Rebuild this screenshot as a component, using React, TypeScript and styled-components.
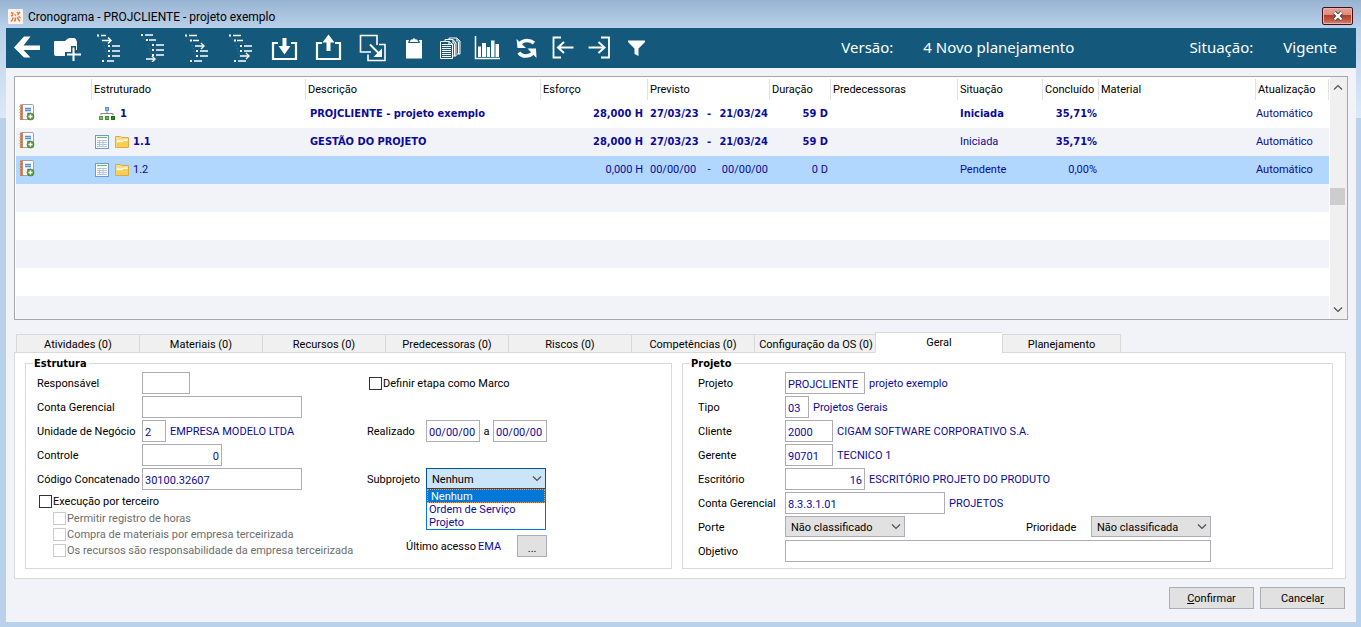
import React from "react";
import styled, { createGlobalStyle, css } from "styled-components";

const UI = `Roboto, Tahoma, "Liberation Sans", sans-serif`;
const UI_BOLD = `"DejaVu Sans Condensed", Tahoma, "DejaVu Sans", sans-serif`;
const navy = "#0a0a9c";
const edge = "#adadb3";
const line = "#d9d9d9";
const pale = "#f2f3f9";

const GlobalStyle = createGlobalStyle`
  *, *::before, *::after { box-sizing: border-box; }
  body { margin: 0; font-family: ${UI}; font-size: 11px; line-height: 14px; color: #000; }
  button, input, select { font: inherit; color: inherit; margin: 0; border-radius: 0; }
`;

/* ---------- window frame ---------- */

const Frame = styled.div`
  display: flex;
  flex-direction: column;
  min-height: 100vh;
  padding: 0 5px 5px 6px;
  background:
    linear-gradient(#98b3d2, #b9d1ea) top / 100% 28px no-repeat,
    linear-gradient(#b9d1ea, #dce9f6) 0 28px / 100% 90px no-repeat,
    #b9d1ea;
`;

const TitleBar = styled.header`
  display: flex;
  align-items: center;
  height: 28px;
  padding: 4px 3px 0 2px;
  gap: 5px;
`;

const Title = styled.h1`
  flex: 1;
  margin: 0;
  padding-top: 2px;
  font: 12px/16px ${UI};
`;

const CloseButton = styled.button`
  display: grid;
  place-items: center;
  width: 31px;
  height: 18px;
  padding: 0;
  border: 1px solid #431016;
  border-radius: 2px;
  box-shadow: inset 0 0 0 1px #e8b3ab;
  background: linear-gradient(#e5a297 0, #d98b7f 44%, #b83a22 46%, #c2604f 80%, #d38c7d);
`;

const ToolBar = styled.div`
  display: flex;
  align-items: center;
  height: 40px;
  padding: 0 19px 0 1px;
  background: #14597c;
  color: #fff;
`;

const ToolButton = styled.button<{ $w: number }>`
  display: flex;
  align-items: center;
  justify-content: center;
  width: ${(p) => p.$w}px;
  height: 40px;
  padding: 0;
  border: 0;
  background: none;
`;

const Status = styled.dl`
  display: flex;
  margin: 0 0 0 auto;
  padding-bottom: 2px;
  font-size: 15px;
  line-height: 20px;
  font-family: "Noto Sans", sans-serif;
`;

const StatusName = styled.dt``;

const StatusValue = styled.dd`
  margin: 0 0 0 30px;
  &:not(:last-child) { margin-right: 115px; }
`;

const Content = styled.main`
  display: flex;
  flex-direction: column;
  flex: 1;
  padding: 8px 8px 13px 8px;
  background: ${pale};
`;

/* ---------- schedule grid ---------- */

const GridBox = styled.section`
  display: flex;
  border: 1px solid #a5a7ac;
  background: #fff;
`;

const Table = styled.table`
  flex: 1;
  width: 0;
  margin: 0 1px;
  table-layout: fixed;
  border-collapse: collapse;
  white-space: nowrap;
`;

const Head = styled.th`
  height: 23px;
  padding: 2px 0 0 2px;
  text-align: left;
  font-weight: 400;
  vertical-align: middle;
  background: linear-gradient(#e2e2e2, #e2e2e2) right 2px / 1px 21px no-repeat;
`;

const Row = styled.tr<{ $tone?: "alt" | "sel"; $bold?: boolean }>`
  height: 28px;
  color: ${navy};
  background: ${(p) => (p.$tone === "sel" ? "#b1d7fe" : p.$tone === "alt" ? pale : "#fff")};
  ${(p) => p.$bold && css`font-family: ${UI_BOLD}; font-weight: 700;`}
`;

const Cell = styled.td<{ $right?: boolean; $plain?: boolean; $pad?: number }>`
  padding: 0 ${(p) => (p.$right ? p.$pad ?? 2 : 0)}px 0 ${(p) => (p.$right ? 0 : p.$pad ?? 2)}px;
  text-align: ${(p) => (p.$right ? "right" : "left")};
  ${(p) => p.$plain && css`font-family: ${UI}; font-weight: 400;`}
`;

const Inline = styled.span`
  display: flex;
  align-items: center;
  gap: 4px;
`;

const Period = styled.span`
  display: flex;
  justify-content: space-between;
  padding-right: 2px;
`;

const ScrollBar = styled.div`
  display: flex;
  flex-direction: column;
  align-items: center;
  justify-content: space-between;
  width: 17px;
  padding: 7px 2px 6px 0;
  background: #f0f0f0;
`;

const Thumb = styled.div`
  width: 15px;
  height: 17px;
  margin-bottom: 5px;
  background: #cdcdcd;
`;

/* ---------- tabs ---------- */

const Tabs = styled.nav`
  display: flex;
  align-items: flex-end;
  height: 21px;
  margin: 12px 0 -1px 2px;
`;

const Tab = styled.button<{ $on?: boolean; $w?: number }>`
  width: ${(p) => p.$w ?? 123}px;
  height: 19px;
  padding: 2px 0 0;
  border: 1px solid ${line};
  border-right-width: 0;
  background: #f0f0f0;
  white-space: nowrap;
  &:last-child { border-right-width: 1px; }
  ${(p) => p.$on && css`
    position: relative;
    height: 21px;
    padding-top: 0;
    margin-left: -2px;
    border-bottom-color: #fff;
    background: #fff;
  `}
`;

const Page = styled.section`
  display: flex;
  gap: 10px;
  margin-right: 2px;
  padding: 3px 12px 9px 10px;
  border: 1px solid ${line};
  background: #fff;
`;

const Group = styled.fieldset<{ $inset: number }>`
  display: flex;
  flex: 1 1 0;
  min-width: 0;
  margin: 0;
  padding: 1px 12px 6px ${(p) => p.$inset}px;
  border: 1px solid ${line};

  legend { margin-left: ${(p) => 7 - p.$inset}px; }
`;

const Legend = styled.legend`
  padding: 1px 2px 0 1px;
  font: 700 11px/14px ${UI_BOLD};
`;

const Column = styled.div<{ $w?: number }>`
  display: flex;
  flex-direction: column;
  gap: 2px;
  min-width: 0;
  flex: ${(p) => (p.$w ? `0 0 ${p.$w}px` : "1 1 0")};
`;

const Line = styled.div<{ $push?: boolean; $indent?: number; $after?: number }>`
  display: flex;
  align-items: center;
  height: 22px;
  padding-left: ${(p) => p.$indent ?? 0}px;
  margin-top: ${(p) => (p.$push ? "auto" : "0")};
  margin-bottom: ${(p) => p.$after ?? 0}px;
`;

const Label = styled.label<{ $w?: number; $center?: boolean }>`
  flex: none;
  width: ${(p) => (p.$w ? `${p.$w}px` : "auto")};
  padding-top: 2px;
  text-align: ${(p) => (p.$center ? "center" : "left")};
  white-space: nowrap;
`;

const Field = styled.input<{ $w: number; $right?: boolean }>`
  flex: none;
  width: ${(p) => p.$w}px;
  height: 22px;
  padding: 2px 2px 0;
  border: 1px solid ${edge};
  background: #fff;
  color: ${navy};
  text-align: ${(p) => (p.$right ? "right" : "left")};
`;

const Value = styled.output`
  margin-left: 4px;
  padding-top: 2px;
  color: ${navy};
  white-space: nowrap;
`;

const CheckLabel = styled.label<{ $sub?: boolean }>`
  display: flex;
  align-items: center;
  height: ${(p) => (p.$sub ? 16 : 18)}px;
  padding-left: ${(p) => (p.$sub ? 16 : 2)}px;
  gap: 1px;
  color: ${(p) => (p.$sub ? "#6d6d6d" : "#000")};
  white-space: nowrap;

  span { padding-top: 1px; }
`;

const Check = styled.input`
  appearance: none;
  width: 13px;
  height: 13px;
  border: 1px solid #333;
  background: #fff;
  &:disabled { border-color: #ccc; }
`;

const SelectBox = styled.div`
  position: relative;
  align-self: flex-start;
  width: 120px;
  height: 21px;
  svg { position: absolute; right: 4px; top: 7px; pointer-events: none; }
`;

const Select = styled.select<{ $open?: boolean }>`
  appearance: none;
  display: block;
  width: 100%;
  height: 21px;
  padding: 2px 18px 0 5px;
  border: 1px solid ${(p) => (p.$open ? "#00549a" : edge)};
  background: ${(p) => (p.$open ? "#cce4f7" : "#e1e1e1")};
`;

const Options = styled.ul`
  position: absolute;
  z-index: 1;
  top: 21px;
  left: 0;
  right: 0;
  margin: 0;
  padding: 0;
  border: 1px solid #0078d7;
  border-top: 0;
  background: #fff;
  color: ${navy};
  list-style: none;
`;

const Option = styled.li<{ $on?: boolean }>`
  height: 13px;
  padding-left: 2px;
  line-height: 14px;
  ${(p) => p.$on && css`
    height: 14px;
    padding-left: 3px;
    background: #0078d7;
    color: #fff;
    border: 1px dotted #ff9a3c;
  `}
`;

const PushButton = styled.button<{ $w: number }>`
  width: ${(p) => p.$w}px;
  height: 22px;
  padding: 1px 0 0;
  border: 1px solid ${edge};
  background: #e1e1e1;
`;

const MoreButton = styled(PushButton)`
  margin-left: 16px;
  padding-top: 6px;
`;

const Footer = styled.footer`
  display: flex;
  justify-content: flex-end;
  gap: 6px;
  margin-top: 8px;
  padding-right: 3px;
`;

/* ---------- toolbar drawings ---------- */

const Glyph = ({ w = 28, children }: { w?: number; children: React.ReactNode }) => (
  <svg width={w} height={28} viewBox={`0 0 ${w} 28`} fill="none" stroke="#fff" aria-hidden>
    {children}
  </svg>
);

const Solid = ({ d }: { d: string }) => <path d={d} fill="#fff" stroke="none" />;

type Branch = { dot?: number; from: number; to: number; y: number; arrow?: boolean };

const BranchGlyph = ({ rows }: { rows: Branch[] }) => (
  <Glyph>
    {rows.map((r) => (
      <g key={r.y} strokeWidth={1.5}>
        {r.dot !== undefined && <path d={`M${r.dot} ${r.y}h2`} strokeWidth={2} />}
        <path d={`M${r.from} ${r.y}H${r.to}`} />
        {r.arrow && <path d={`M${r.to - 3} ${r.y - 3}l3 3-3 3`} strokeWidth={1.4} />}
      </g>
    ))}
    <path d="M3.500 3.500L8 8M9 11L13 23" strokeWidth={1} strokeDasharray="1 2" opacity={0.25} />
  </Glyph>
);

const branches: Branch[][] = [
  [
    { dot: 2, from: 6, to: 11, y: 1.5 },
    { from: 7, to: 16, y: 6.5, arrow: true },
    { dot: 13, from: 17, to: 25, y: 12 },
    { dot: 13, from: 17, to: 25, y: 17 },
    { dot: 13, from: 17, to: 25, y: 22 },
    { dot: 7, from: 12, to: 19, y: 27 },
  ],
  [
    { dot: 2, from: 6, to: 14, y: 1 },
    { dot: 7, from: 10, to: 17, y: 6 },
    { dot: 13, from: 17, to: 25, y: 11 },
    { dot: 13, from: 17, to: 25, y: 16 },
    { dot: 13, from: 17, to: 25, y: 21 },
    { from: 7, to: 16, y: 25, arrow: true },
  ],
  [
    { dot: 2, from: 6, to: 14, y: 1.5 },
    { dot: 7, from: 10, to: 16, y: 6.5 },
    { from: 12, to: 21, y: 12, arrow: true },
    { dot: 13, from: 17, to: 25, y: 17 },
    { dot: 13, from: 17, to: 25, y: 22 },
    { dot: 7, from: 11, to: 19, y: 27 },
  ],
  [
    { dot: 2, from: 6, to: 14, y: 1.5 },
    { dot: 7, from: 10, to: 16, y: 6.5 },
    { dot: 13, from: 17, to: 25, y: 12 },
    { dot: 13, from: 17, to: 25, y: 17 },
    { from: 13, to: 22, y: 22, arrow: true },
    { dot: 7, from: 11, to: 19, y: 27 },
  ],
];

const tools: { name: string; w: number; art: React.ReactNode }[] = [
  {
    name: "Voltar",
    w: 40,
    art: <Glyph><Solid d="M1 13.500L11 2.500H17.500L10.500 11.500H27V16H10.500L17.500 23.500H11Z" /></Glyph>,
  },
  {
    name: "Incluir",
    w: 40,
    art: (
      <Glyph>
        <Solid d="M1 8Q1 7 2 7H12L15 4.500Q16 4 17 4H21Q22.500 4 23 5.500L24 8V16H18V22H3Q1 22 1 20Z" />
        <path d="M20.500 12V28M12 20.500H28" stroke="#14597c" strokeWidth={5} />
        <path d="M20.500 13.500V27M14 20.500H28" strokeWidth={2} />
      </Glyph>
    ),
  },
  ...["Inserir acima", "Inserir abaixo", "Inserir filho acima", "Inserir filho abaixo"].map((name, i) => ({
    name,
    w: 44,
    art: <BranchGlyph rows={branches[i]} />,
  })),
  {
    name: "Importar",
    w: 44,
    art: (
      <Glyph>
        <path d="M7 9H2V25H25V9H20" strokeWidth={2.2} />
        <Solid d="M11.500 4H15.500V12H19.500L13.500 20.500L7.500 12H11.500Z" />
      </Glyph>
    ),
  },
  {
    name: "Exportar",
    w: 44,
    art: (
      <Glyph>
        <path d="M7 9H2V25H25V9H20" strokeWidth={2.2} />
        <Solid d="M11.500 17H15.500V8.500H19.500L13.500 0.500L7.500 8.500H11.500Z" />
      </Glyph>
    ),
  },
  {
    name: "Mover",
    w: 44,
    art: (
      <Glyph>
        <path d="M12 18H1.500V1.500H18V11" strokeWidth={1.6} />
        <path d="M20 10.500H26V26.500H9V20.500" strokeWidth={1.6} />
        <path d="M11 10.500L21 20.500" strokeWidth={2} />
        <Solid d="M23 14.500V23H14.500Z" />
      </Glyph>
    ),
  },
  {
    name: "Colar",
    w: 37,
    art: (
      <Glyph w={27}>
        <Solid d="M6 6H9L8 9H20L19 6H22V24.500H6Z" />
        <Solid d="M9.500 8L11 5.500H12.500Q14 3 15.500 5.500H17L18.500 8Z" />
      </Glyph>
    ),
  },
  {
    name: "Copiar",
    w: 37,
    art: (
      <Glyph w={27}>
        <path d="M3.500 7.500H12L15.500 10.500V24.500H3.500Z" />
        <path d="M8 7V5.500H16L19 9V22H16M12 5V4H20L23 7V20H20" />
        <path d="M5 10.500H12M5 12.500H14M5 14.500H14M5 16.500H14M5 18.500H14M5 20.500H14M5 22.500H14" strokeWidth={1.2} />
        <path d="M12 7.500V10.500H15.500M16 5.500V9H19M20 4V7H23M17.500 10V22M21.500 8V20" strokeWidth={1.2} />
      </Glyph>
    ),
  },
  {
    name: "Gráfico",
    w: 37,
    art: (
      <Glyph w={27}>
        <path d="M1.500 2V24.500H26" strokeWidth={1.5} />
        <Solid d="M4 12.500H7V23H4ZM8 9H12V23H8ZM12.800 13H16V23H12.800ZM17 6.500H20.500V23H17ZM21.500 10H25V23H21.500Z" />
      </Glyph>
    ),
  },
  {
    name: "Atualizar",
    w: 37,
    art: (
      <Glyph w={27}>
        <path d="M9 9.500Q12 6.500 16 6.500Q20 6.500 23 9" strokeWidth={3.6} />
        <Solid d="M5.500 5L6.500 14H15Z" />
        <path d="M22 19Q19 22 15 22Q10 22 8 18.500" strokeWidth={3.6} />
        <Solid d="M25.500 24L25 14.500H16.500Z" />
      </Glyph>
    ),
  },
  {
    name: "Recuar",
    w: 37,
    art: (
      <Glyph w={27}>
        <path d="M13 3.500H5.500V23.500H13" strokeWidth={1.8} />
        <path d="M25.500 13.500H10M16 8L10 13.500L16 19" strokeWidth={2} />
      </Glyph>
    ),
  },
  {
    name: "Avançar",
    w: 37,
    art: (
      <Glyph w={27}>
        <path d="M16 3.500H24V23.500H16" strokeWidth={1.8} />
        <path d="M3.500 13.500H19M13.500 8L19.500 13.500L13.500 19" strokeWidth={2} />
      </Glyph>
    ),
  },
  {
    name: "Filtrar",
    w: 37,
    art: <Glyph w={27}><Solid d="M6 6.500H23V8L16.500 14.500V22L12.500 20V14.500L6 8Z" /></Glyph>,
  },
];

/* ---------- small drawings ---------- */

const AppLogo = () => (
  <svg width={15} height={15} viewBox="0 0 15 15" aria-hidden>
    <rect width={15} height={15} rx={1} fill="#fdf3ee" />
    <path d="M3 3.500l2.500 1.500M6.500 5.500l1.500 1M9.500 6l2.500-3M3 7l2-1M10 4l-1-1M3 12.500q2-2 2-4M6.500 12.500q1.500-2 .5-4M9 8.500l3 4M10.500 7.500l2 1.500" stroke="#f0743a" strokeWidth={1.5} fill="none" />
  </svg>
);

const CloseCross = () => (
  <svg width={12} height={10} viewBox="0 0 12 10" aria-hidden>
    <path d="M2.500 1.500L9.500 8.500M9.500 1.500L2.500 8.500" stroke="#4a4a55" strokeWidth={4} />
    <path d="M2.500 1.500L9.500 8.500M9.500 1.500L2.500 8.500" stroke="#fff" strokeWidth={2.2} />
  </svg>
);

const Notebook = () => (
  <svg width={16} height={17} viewBox="0 0 16 17" aria-hidden>
    <rect x={2.5} y={0.5} width={12} height={15} rx={1} fill="#f8fafc" stroke="#a3a3a3" />
    <path d="M2.500 0.500V16" stroke="#c4703c" strokeWidth={2.6} />
    <path d="M0 2.500H2.500M0 5.500H2.500M0 8.500H2.500M0 11.500H2.500M0 14H2.500" stroke="#c9b5a5" strokeWidth={0.8} />
    <path d="M6 4.500H12M6 6.500H12M8 9.500H12" stroke="#5b8fdc" strokeWidth={1.4} />
    <circle cx={11.500} cy={12.500} r={3.500} fill="#5f9e42" stroke="#3a7426" strokeWidth={0.6} />
    <path d="M11.500 10.500V14.500M9.500 12.500H13.500" stroke="#fff" strokeWidth={1.3} />
  </svg>
);

const OrgChart = () => (
  <svg width={17} height={16} viewBox="0 0 17 16" aria-hidden>
    <path d="M8 4.500V7.500M2 9V7.500H14V9" stroke="#888" fill="none" />
    <rect x={6.500} y={1.500} width={3} height={3} fill="#8dbcf5" stroke="#5b92dc" />
    <rect x={0.500} y={10.500} width={3} height={3} fill="#7cca6a" stroke="#4a9a3c" />
    <rect x={6.500} y={10.500} width={3} height={3} fill="#6cc05a" stroke="#3c8e2f" />
    <rect x={12.500} y={10.500} width={3} height={3} fill="#2c8a2c" stroke="#1f6a1f" />
  </svg>
);

const Sheet = () => (
  <svg width={16} height={15} viewBox="0 0 16 15" aria-hidden>
    <rect x={0.5} y={0.5} width={13} height={13} fill="#fff" stroke="#6f98d0" />
    <path d="M2 2.500H12" stroke="#6cb866" strokeWidth={1.2} />
    <path d="M2 5.500H12M2 7.500H12M2 9.500H12M2 11.500H12M4.500 5V12M8 5V12" stroke="#b3c4de" />
  </svg>
);

const Folder = () => (
  <svg width={14} height={15} viewBox="0 0 14 15" aria-hidden>
    <path d="M0.500 12.500V1.500H5.500L6.500 2.500H13.500V12.500Z" fill="#f8dc8a" stroke="#d9ab45" />
    <path d="M2 5.500H8L9 4.500H12.500V7H2Z" fill="#fffbe6" />
    <path d="M1.500 12V7.500H7L8.500 6H13V12Z" fill="#f7cf50" />
  </svg>
);

const Chevron = ({ dir = "down" }: { dir?: "up" | "down" }) => (
  <svg width={10} height={7} viewBox="0 0 10 7" fill="none" aria-hidden>
    <path d={dir === "up" ? "M1 5.500L5 1.500L9 5.500" : "M1 1.500L5 5.500L9 1.500"} stroke="#505050" strokeWidth={1.2} />
  </svg>
);

/* ---------- data ---------- */

const columns: { name: string; w?: number }[] = [
  { name: "", w: 76 },
  { name: "Estruturado", w: 214 },
  { name: "Descrição" },
  { name: "Esforço", w: 107 },
  { name: "Previsto", w: 122 },
  { name: "Duração", w: 61 },
  { name: "Predecessoras", w: 127 },
  { name: "Situação", w: 85 },
  { name: "Concluído", w: 56 },
  { name: "Material", w: 157 },
  { name: "Atualização", w: 73 },
];

type Stage = {
  code: string;
  text: string;
  effort: string;
  start: string;
  end: string;
  days: string;
  state: string;
  done: string;
  bold?: boolean;
  boldState?: boolean;
  root?: boolean;
  tone?: "alt" | "sel";
};

const stages: Stage[] = [
  { code: "1", text: "PROJCLIENTE - projeto exemplo", effort: "28,000 H", start: "27/03/23", end: "21/03/24", days: "59 D", state: "Iniciada", done: "35,71%", bold: true, boldState: true, root: true },
  { code: "1.1", text: "GESTÃO DO PROJETO", effort: "28,000 H", start: "27/03/23", end: "21/03/24", days: "59 D", state: "Iniciada", done: "35,71%", bold: true, tone: "alt" },
  { code: "1.2", text: "", effort: "0,000 H", start: "00/00/00", end: "00/00/00", days: "0 D", state: "Pendente", done: "0,00%", tone: "sel" },
];

const fillers: ("alt" | undefined)[] = ["alt", undefined, "alt", undefined];

const LastRow = styled(Row)`
  height: 23px;
`;

const tabs: { name: string; w?: number; on?: boolean }[] = [
  { name: "Atividades (0)" },
  { name: "Materiais (0)" },
  { name: "Recursos (0)" },
  { name: "Predecessoras (0)" },
  { name: "Riscos (0)" },
  { name: "Competências (0)" },
  { name: "Configuração da OS (0)" },
  { name: "Geral", w: 127, on: true },
  { name: "Planejamento", w: 119 },
];

const projectFields = [
  { id: "projeto", label: "Projeto", value: "PROJCLIENTE", w: 80, note: "projeto exemplo" },
  { id: "tipo", label: "Tipo", value: "03", w: 24, note: "Projetos Gerais" },
  { id: "cliente", label: "Cliente", value: "2000", w: 48, note: "CIGAM SOFTWARE CORPORATIVO S.A." },
  { id: "gerente", label: "Gerente", value: "90701", w: 48, note: "TECNICO 1" },
  { id: "escritorio", label: "Escritório", value: "16", w: 80, note: "ESCRITÓRIO PROJETO DO PRODUTO", right: true },
  { id: "conta", label: "Conta Gerencial", value: "8.3.3.1.01", w: 160, note: "PROJETOS" },
];

const thirdPartyChecks = [
  "Permitir registro de horas",
  "Compra de materiais por empresa terceirizada",
  "Os recursos são responsabilidade da empresa terceirizada",
];

/* ---------- parts ---------- */

const Schedule = () => (
  <GridBox>
    <Table>
      <colgroup>
        {columns.map((c, i) => <col key={i} width={c.w} />)}
      </colgroup>
      <thead>
        <tr>{columns.map((c, i) => <Head key={i} scope="col">{c.name}</Head>)}</tr>
      </thead>
      <tbody>
        {stages.map((s) => (
          <Row key={s.code} $tone={s.tone} $bold={s.bold}>
            <Cell $pad={3}><Notebook /></Cell>
            <Cell $pad={s.root ? 7 : 3}>
              <Inline>
                {s.root ? <OrgChart /> : <><Sheet /><Folder /></>}
                {s.code}
              </Inline>
            </Cell>
            <Cell $pad={4}>{s.text}</Cell>
            <Cell $right $pad={5}>{s.effort}</Cell>
            <Cell><Period><span>{s.start}</span><span>-</span><span>{s.end}</span></Period></Cell>
            <Cell $right $pad={3}>{s.days}</Cell>
            <Cell />
            <Cell $plain={!s.boldState}>{s.state}</Cell>
            <Cell $right>{s.done}</Cell>
            <Cell />
            <Cell $plain $pad={0}>Automático</Cell>
          </Row>
        ))}
        {fillers.map((tone, i) => (
          <Row key={i} $tone={tone}><Cell colSpan={columns.length} /></Row>
        ))}
        <LastRow $tone="alt"><Cell colSpan={columns.length} /></LastRow>
      </tbody>
    </Table>
    <ScrollBar>
      <Chevron dir="up" />
      <Thumb />
      <Chevron />
    </ScrollBar>
  </GridBox>
);

const StructureGroup = () => (
  <Group $inset={11}>
    <Legend>Estrutura</Legend>
    <Column $w={330}>
      <Line><Label $w={105} htmlFor="resp">Responsável</Label><Field id="resp" $w={48} /></Line>
      <Line><Label $w={105} htmlFor="cg">Conta Gerencial</Label><Field id="cg" $w={160} /></Line>
      <Line>
        <Label $w={105} htmlFor="un">Unidade de Negócio</Label>
        <Field id="un" $w={24} defaultValue="2" />
        <Value>EMPRESA MODELO LTDA</Value>
      </Line>
      <Line><Label $w={105} htmlFor="ctl">Controle</Label><Field id="ctl" $w={80} $right defaultValue="0" /></Line>
      <Line><Label $w={105} htmlFor="cod">Código Concatenado</Label><Field id="cod" $w={160} defaultValue="30100.32607" /></Line>
      <div>
        <CheckLabel><Check type="checkbox" /><span>Execução por terceiro</span></CheckLabel>
        {thirdPartyChecks.map((t) => (
          <CheckLabel key={t} $sub><Check type="checkbox" disabled /><span>{t}</span></CheckLabel>
        ))}
      </div>
    </Column>
    <Column>
      <Line $after={24}><CheckLabel><Check type="checkbox" /><span>Definir etapa como Marco</span></CheckLabel></Line>
      <Line $after={24}>
        <Label $w={59} htmlFor="de">Realizado</Label>
        <Field id="de" $w={54} defaultValue="00/00/00" />
        <Label $w={13} $center htmlFor="ate">a</Label>
        <Field id="ate" $w={54} defaultValue="00/00/00" />
      </Line>
      <Line>
        <Label $w={59} htmlFor="sub">Subprojeto</Label>
        <SelectBox>
          <Select id="sub" $open defaultValue="Nenhum"><option>Nenhum</option><option>Ordem de Serviço</option><option>Projeto</option></Select>
          <Chevron />
          <Options role="listbox" aria-label="Subprojeto">
            <Option role="option" aria-selected $on>Nenhum</Option>
            <Option role="option">Ordem de Serviço</Option>
            <Option role="option">Projeto</Option>
          </Options>
        </SelectBox>
      </Line>
      <Line $push $indent={39} $after={5}>
        <Label $w={68} htmlFor="acesso">Último acesso</Label>
        <Value id="acesso">EMA</Value>
        <MoreButton $w={30} aria-label="Detalhes do último acesso">...</MoreButton>
      </Line>
    </Column>
  </Group>
);

const ProjectGroup = () => (
  <Group $inset={15}>
    <Legend>Projeto</Legend>
    <Column>
      {projectFields.map((f) => (
        <Line key={f.id}>
          <Label $w={87} htmlFor={f.id}>{f.label}</Label>
          <Field id={f.id} $w={f.w} $right={f.right} defaultValue={f.value} />
          <Value>{f.note}</Value>
        </Line>
      ))}
      <Line>
        <Label $w={87} htmlFor="porte">Porte</Label>
        <SelectBox><Select id="porte"><option>Não classificado</option></Select><Chevron /></SelectBox>
        <Line $indent={121}>
          <Label $w={65} htmlFor="prio">Prioridade</Label>
          <SelectBox><Select id="prio"><option>Não classificada</option></Select><Chevron /></SelectBox>
        </Line>
      </Line>
      <Line><Label $w={87} htmlFor="obj">Objetivo</Label><Field id="obj" $w={426} /></Line>
    </Column>
  </Group>
);

export default function App() {
  return (
    <>
      <GlobalStyle />
      <Frame>
        <TitleBar>
          <AppLogo />
          <Title>Cronograma - PROJCLIENTE - projeto exemplo</Title>
          <CloseButton aria-label="Fechar"><CloseCross /></CloseButton>
        </TitleBar>
        <ToolBar>
          {tools.map((t) => (
            <ToolButton key={t.name} $w={t.w} aria-label={t.name}>{t.art}</ToolButton>
          ))}
          <Status>
            <StatusName>Versão:</StatusName>
            <StatusValue>4 Novo planejamento</StatusValue>
            <StatusName>Situação:</StatusName>
            <StatusValue>Vigente</StatusValue>
          </Status>
        </ToolBar>
        <Content>
          <Schedule />
          <Tabs>
            {tabs.map((t) => <Tab key={t.name} $w={t.w} $on={t.on}>{t.name}</Tab>)}
          </Tabs>
          <Page>
            <StructureGroup />
            <ProjectGroup />
          </Page>
          <Footer>
            <PushButton $w={85}><u>C</u>onfirmar</PushButton>
            <PushButton $w={85}>Cancela<u>r</u></PushButton>
          </Footer>
        </Content>
      </Frame>
    </>
  );
}
